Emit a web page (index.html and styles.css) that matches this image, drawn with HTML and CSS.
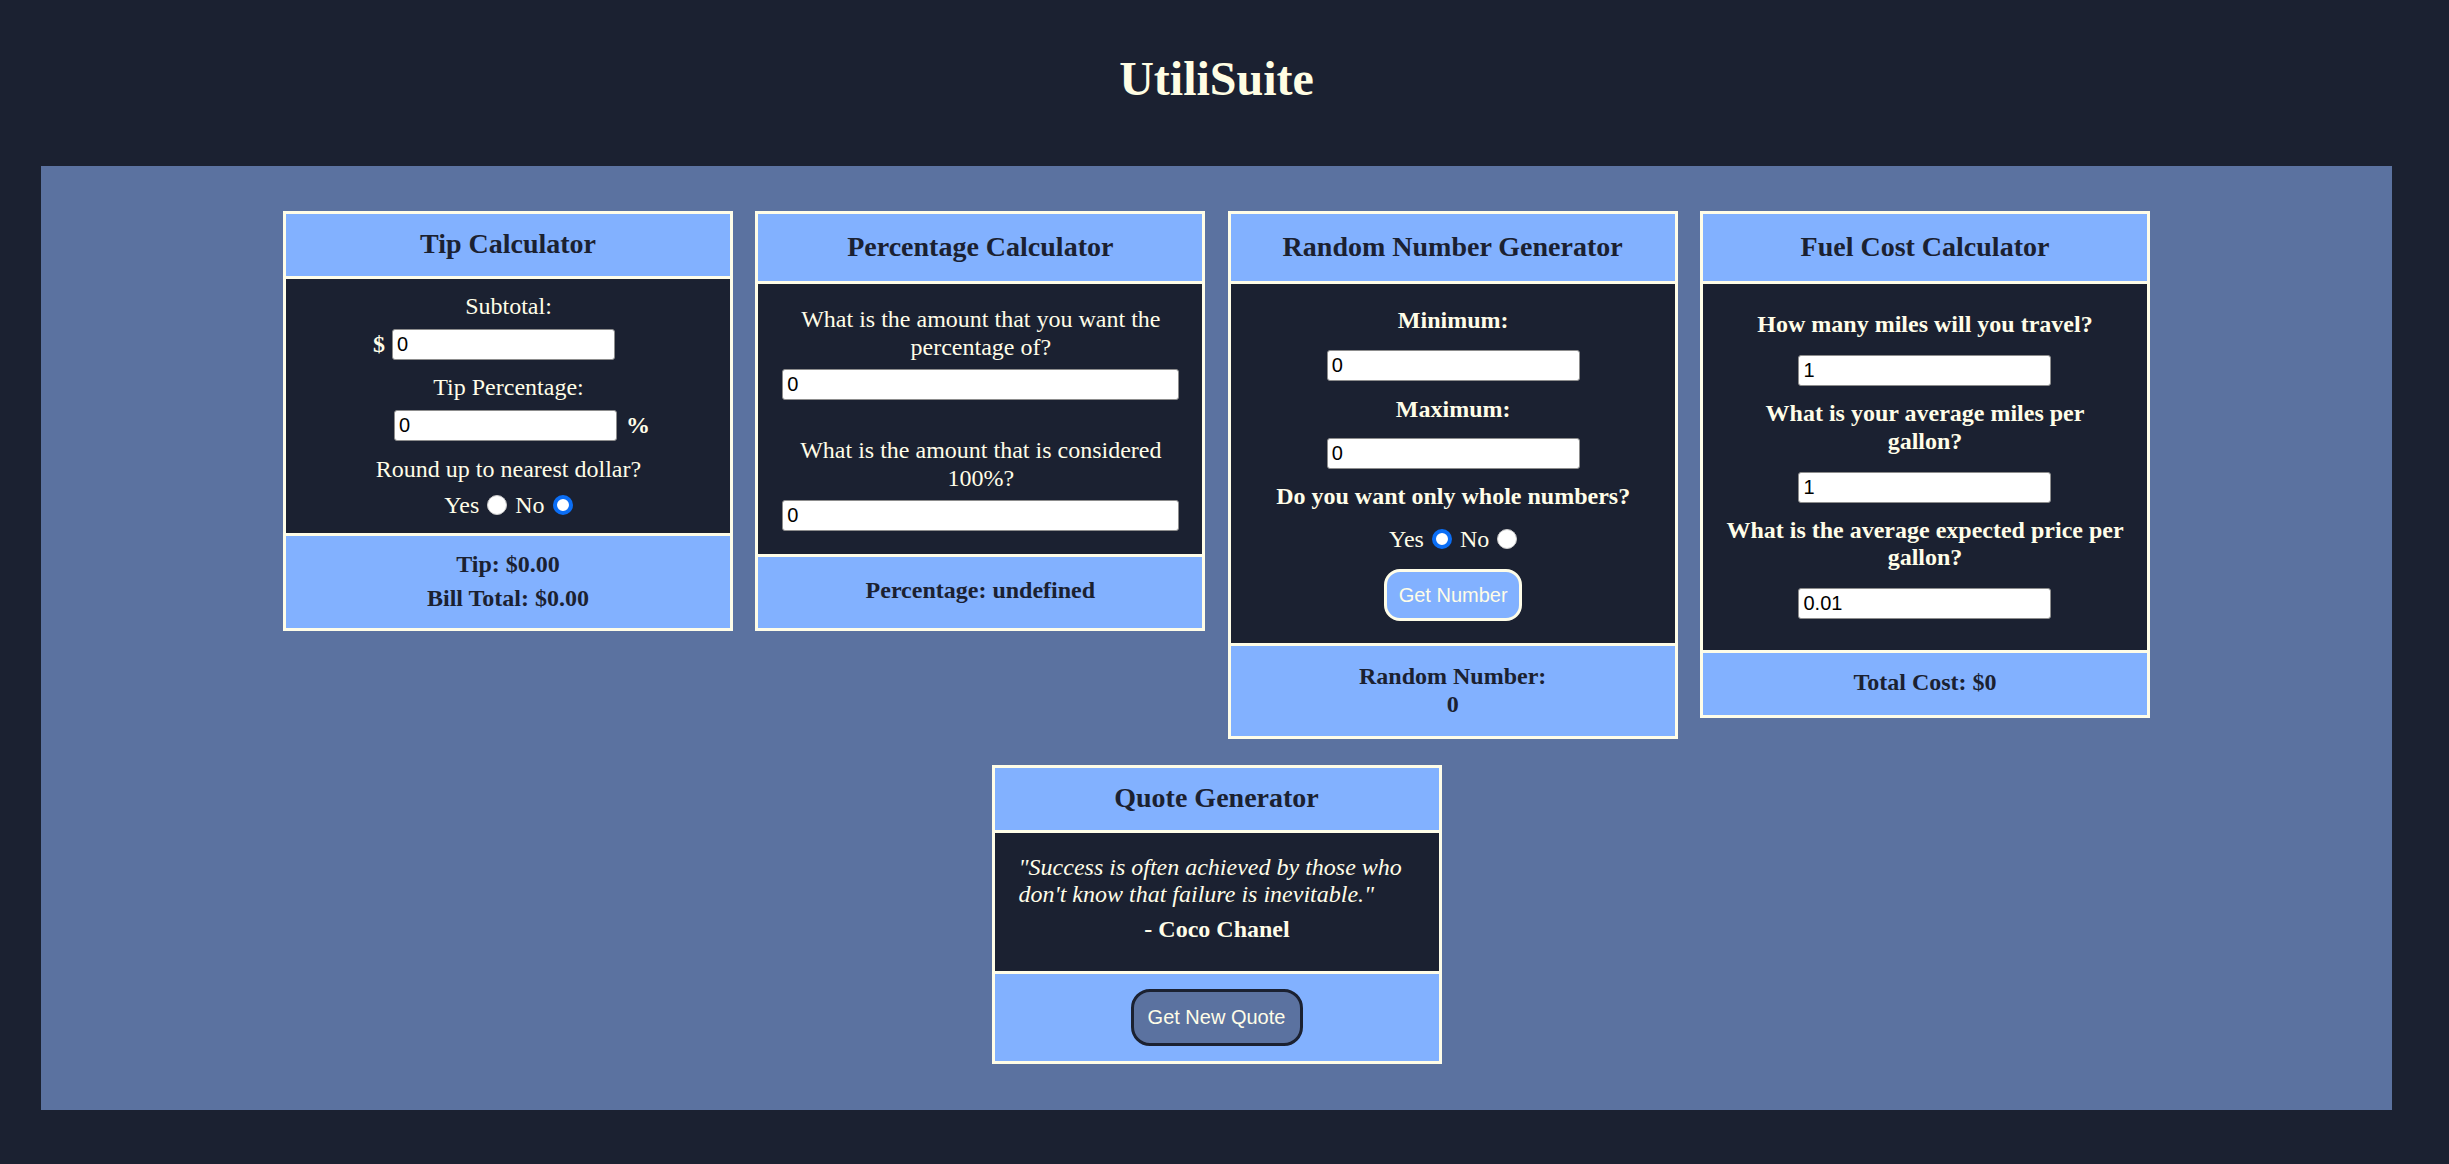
FILE: index.html
```html
<!DOCTYPE html>
<html lang="en">
<head>
<meta charset="utf-8">
<title>UtiliSuite</title>
<link rel="stylesheet" href="styles.css">
</head>
<body>
<div class="page">
  <header class="site-header"><h1 class="site-title">UtiliSuite</h1></header>
  <main class="panel">
    <div class="cards">

      <section class="card">
        <div class="card-head head-tip"><h3 class="card-title">Tip Calculator</h3></div>
        <div class="card-body body-tip">
          <div class="label gap-s">Subtotal:</div>
          <div class="field-row row-dollar gap-m"><span class="unit">$</span><input class="text-input w-tip" type="text" value="0"></div>
          <div class="label gap-s">Tip Percentage:</div>
          <div class="field-row row-percent gap-m"><input class="text-input w-tip" type="text" value="0"><span class="unit unit-pct">%</span></div>
          <div class="label gap-s">Round up to nearest dollar?</div>
          <div class="radio-row"><span>Yes</span><input class="radio" type="radio" name="round"><span>No</span><input class="radio r-last" type="radio" name="round" checked></div>
        </div>
        <div class="card-foot foot-tip">
          <div class="result">Tip: $0.00</div>
          <div class="result">Bill Total: $0.00</div>
        </div>
      </section>

      <section class="card">
        <div class="card-head head-std"><h3 class="card-title">Percentage Calculator</h3></div>
        <div class="card-body body-pct">
          <div class="label pct-label">What is the amount that you want the percentage of?</div>
          <input class="text-input w-full pct-input1" type="text" value="0">
          <div class="label pct-label">What is the amount that is considered 100%?</div>
          <input class="text-input w-full" type="text" value="0">
        </div>
        <div class="card-foot foot-pct">
          <div class="result">Percentage: undefined</div>
        </div>
      </section>

      <section class="card">
        <div class="card-head head-std"><h3 class="card-title">Random Number Generator</h3></div>
        <div class="card-body body-rand">
          <div class="label bold rand-label">Minimum:</div>
          <input class="text-input w-mid rand-input" type="text" value="0">
          <div class="label bold rand-label">Maximum:</div>
          <input class="text-input w-mid rand-input2" type="text" value="0">
          <div class="label bold rand-q">Do you want only whole numbers?</div>
          <div class="radio-row rand-radios"><span>Yes</span><input class="radio" type="radio" name="whole" checked><span>No</span><input class="radio r-last" type="radio" name="whole"></div>
          <button class="btn btn-light" type="button">Get Number</button>
        </div>
        <div class="card-foot foot-rand">
          <div class="result">Random Number:</div>
          <div class="result">0</div>
        </div>
      </section>

      <section class="card">
        <div class="card-head head-std"><h3 class="card-title">Fuel Cost Calculator</h3></div>
        <div class="card-body body-fuel">
          <div class="label bold fuel-label">How many miles will you travel?</div>
          <input class="text-input w-mid fuel-input" type="text" value="1">
          <div class="label bold fuel-label">What is your average miles per<br>gallon?</div>
          <input class="text-input w-mid fuel-input" type="text" value="1">
          <div class="label bold fuel-label">What is the average expected price per<br>gallon?</div>
          <input class="text-input w-mid" type="text" value="0.01">
        </div>
        <div class="card-foot foot-fuel">
          <div class="result">Total Cost: $0</div>
        </div>
      </section>

      <section class="card">
        <div class="card-head head-quote"><h3 class="card-title">Quote Generator</h3></div>
        <div class="card-body body-quote">
          <p class="quote-text">"Success is often achieved by those who don't know that failure is inevitable."</p>
          <p class="quote-author">- Coco Chanel</p>
        </div>
        <div class="card-foot foot-quote">
          <button class="btn btn-dark" type="button">Get New Quote</button>
        </div>
      </section>

    </div>
  </main>
</div>
</body>
</html>
```

FILE: styles.css
```css
* { box-sizing: border-box; }

html, body {
  margin: 0;
  padding: 0;
  background: #1b2131;
}

body {
  font-family: "Liberation Serif", "Times New Roman", serif;
  font-size: 24px;
  line-height: 27.6px;
  color: #fffde8;
}

.page {
  width: 2433px;
}

.site-header {
  padding: 51px 0 60px;
}

.site-title {
  margin: 0;
  font-size: 48px;
  line-height: 55px;
  font-weight: bold;
  text-align: center;
  color: #fffde3;
}

.panel {
  margin: 0 41px;
  background: #5b72a0;
  padding: 45px 0 46px;
}

.cards {
  width: 1867px;
  margin: 0 auto;
  display: flex;
  flex-wrap: wrap;
  justify-content: center;
  align-items: flex-start;
  column-gap: 22.33px;
  row-gap: 26px;
}

.card {
  width: 450px;
  background: #fffde8;
  padding: 3px;
  display: flex;
  flex-direction: column;
  gap: 3px;
}

.card-head,
.card-foot {
  background: #82b1ff;
  color: #1b2131;
  text-align: center;
}

.card-title {
  margin: 0;
  font-size: 28px;
  line-height: 32px;
  font-weight: bold;
}

.head-tip { padding: 14px 0 16px; }
.head-std { padding: 17px 0 18px; }
.head-quote { padding: 14px 0 16px; }

.card-body {
  background: #1b2131;
  color: #fffde8;
  display: flex;
  flex-direction: column;
  align-items: center;
  text-align: center;
  padding-left: 24px;
  padding-right: 23px;
}

.label {
  line-height: 27.6px;
}

.bold { font-weight: bold; }

/* Tip */
.body-tip { padding-top: 14px; padding-bottom: 14px; }
.gap-s { margin-bottom: 8.3px; }
.gap-m { margin-bottom: 14.5px; }

.field-row {
  display: flex;
  align-items: center;
  height: 31px;
}

.row-dollar { padding-right: 29px; gap: 7px; }
.row-percent { padding-left: 27px; gap: 9px; }

.unit {
  font-weight: bold;
  line-height: 27.6px;
}

.text-input {
  height: 31px;
  border: 1px solid #8d8d8d;
  border-radius: 3px;
  background: #ffffff;
  padding: 1px 4px;
  font-family: "Liberation Sans", Arial, sans-serif;
  font-size: 20px;
  line-height: normal;
  color: #000000;
}

.w-tip { width: 223px; }
.w-full { width: 397px; }
.w-mid { width: 253px; }

.radio-row {
  display: flex;
  align-items: center;
  height: 27.6px;
  line-height: 27.6px;
}

.radio {
  appearance: none;
  -webkit-appearance: none;
  width: 20px;
  height: 20px;
  border-radius: 50%;
  background: #ffffff;
  border: 1px solid #c9c9c9;
  margin: 0 8px;
}

.radio.r-last { margin-right: 0; }

.radio:checked {
  border: 4px solid #0b6ef5;
}

.card-foot .result {
  font-weight: bold;
  line-height: 27.6px;
}

.foot-tip {
  padding: 15px 0 16px;
  display: flex;
  flex-direction: column;
  gap: 5.7px;
}

/* Percentage */
.body-pct { padding-top: 22px; padding-bottom: 22.5px; }
.pct-label { margin-bottom: 8px; }
.pct-input1 { margin-bottom: 37px; }
.foot-pct { padding: 20px 0 24px; }

/* Random */
.body-rand { padding-top: 23px; padding-bottom: 22.3px; }
.rand-label { margin-bottom: 15px; }
.rand-input { margin-bottom: 15.3px; }
.rand-input2 { margin-bottom: 13.5px; }
.rand-q { margin-bottom: 15px; }
.rand-radios { margin-bottom: 16px; }
.foot-rand { padding: 17px 0 17px; }

.btn {
  font-family: "Liberation Sans", Arial, sans-serif;
  font-size: 20px;
  line-height: normal;
  color: #fffde8;
  border-width: 3px;
  border-style: solid;
  cursor: pointer;
}

.btn-light {
  width: 138px;
  height: 52px;
  background: #82b1ff;
  border-color: #fffde8;
  border-radius: 16px;
}

.btn-dark {
  width: 172px;
  height: 57px;
  background: #5b72a0;
  border-color: #1b2131;
  border-radius: 19px;
}

/* Fuel */
.body-fuel {
  padding: 27.4px 12px 30.3px;
}
.fuel-label { margin-bottom: 16.5px; }
.fuel-input { margin-bottom: 13.8px; }
.foot-fuel { padding: 16.5px 0 18px; }

/* Quote */
.body-quote {
  padding-top: 21px;
  padding-bottom: 27px;
  align-items: stretch;
}

.quote-text {
  margin: 0 0 7.5px;
  font-style: italic;
  text-align: left;
}

.quote-author {
  margin: 0;
  font-weight: bold;
  text-align: center;
}

.foot-quote { padding: 15.4px 0 15px; }
.foot-quote .btn { display: block; margin: 0 auto; }
```
